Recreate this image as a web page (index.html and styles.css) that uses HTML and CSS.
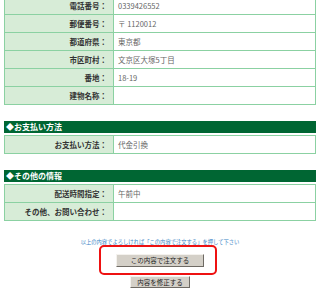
FILE: index.html
```html
<!DOCTYPE html>
<html lang="ja">
<head>
  <meta charset="UTF-8" />
  <title>ご注文内容の確認</title>
  <link rel="stylesheet" href="styles.css">
</head>
<body>
<div id="page">

  <table class="form-table first">
    <tr><th>電話番号：</th><td>0339426552</td></tr>
    <tr><th>郵便番号：</th><td>〒 1120012</td></tr>
    <tr><th>都道府県：</th><td>東京都</td></tr>
    <tr><th>市区町村：</th><td>文京区大塚5丁目</td></tr>
    <tr><th>番地：</th><td>18-19</td></tr>
    <tr><th>建物名称：</th><td></td></tr>
  </table>

  <div class="section-title">◆お支払い方法</div>
  <table class="form-table">
    <tr><th>お支払い方法：</th><td>代金引換</td></tr>
  </table>

  <div class="section-title">◆その他の情報</div>
  <table class="form-table">
    <tr><th>配送時間指定：</th><td>午前中</td></tr>
    <tr><th>その他、お問い合わせ：</th><td></td></tr>
  </table>

  <p class="notice">以上の内容でよろしければ「この内容で注文する」を押して下さい</p>

  <div class="actions">
    <div class="highlight">
      <button class="btn btn-order">この内容で注文する</button>
    </div>
    <button class="btn btn-back">内容を修正する</button>
  </div>

</div>
</body>
</html>
```

FILE: styles.css
```css
body {
  margin: 0;
  padding: 0;
  background-color: white;
  font-family: "Noto Sans CJK JP", "DejaVu Sans", sans-serif;
  font-size: 7.5px;
  color: #333;
}

#page {
  width: 312px;
  margin: -4px 0 0 4px;
}

.form-table {
  width: 312px;
  border-collapse: collapse;
  border: 1px solid #b4e1c4;
  margin-top: 2px;
}

.form-table.first {
  margin-top: 0;
}

.form-table th,
.form-table td {
  height: 17px;
  padding: 0;
  border: 1px solid #8bd1a2;
  line-height: 10px;
}

.form-table th {
  width: 102px;
  padding-right: 6px;
  text-align: right;
  font-weight: bold;
  background-color: #d7ecd7;
  color: #333;
}

.form-table td {
  padding-left: 4px;
  text-align: left;
  color: #666;
}

.section-title {
  margin-top: 16px;
  height: 12px;
  line-height: 12px;
  padding-left: 2px;
  background-color: #006633;
  color: white;
  font-weight: bold;
  font-size: 8px;
}

.notice {
  margin: 19px 0 0;
  text-align: center;
  font-size: 5.3px;
  line-height: 4px;
  color: #3d86c6;
}

.actions {
  display: flex;
  flex-direction: column;
  align-items: center;
  margin-top: 1px;
}

.highlight {
  width: 114px;
  height: 26px;
  border: 2px solid #ee1111;
  border-radius: 5px;
  display: flex;
  align-items: center;
  justify-content: center;
  margin-left: -4px;
}

.btn {
  font-family: "Noto Sans CJK JP", "DejaVu Sans", sans-serif;
  font-size: 6.5px;
  line-height: 9px;
  color: #222;
  background-color: #d4d0c8;
  border: 1px solid;
  border-color: #f4f2ee #6e6a64 #6e6a64 #f4f2ee;
  padding: 0;
  cursor: pointer;
}

.btn-order {
  width: 88px;
  height: 13px;
  margin-left: 4px;
}

.btn-back {
  width: 60px;
  height: 12px;
  margin-top: 1px;
}
```
